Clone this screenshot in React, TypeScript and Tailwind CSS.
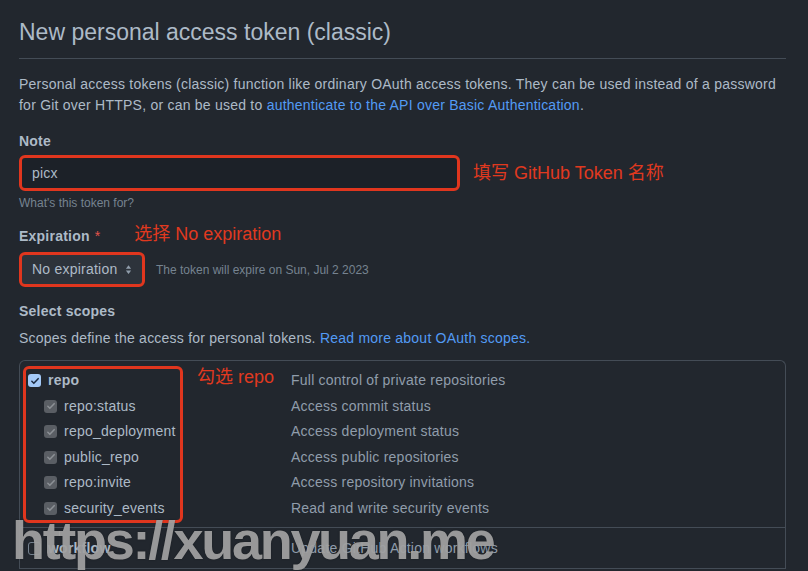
const scopes = [
  { name: "repo:status", desc: "Access commit status" },
  { name: "repo_deployment", desc: "Access deployment status" },
  { name: "public_repo", desc: "Access public repositories" },
  { name: "repo:invite", desc: "Access repository invitations" },
  { name: "security_events", desc: "Read and write security events" },
];

function Check({ main }: { main?: boolean }) {
  return (
    <span
      className={
        main
          ? "flex h-[13px] w-[13px] items-center justify-center rounded-[3px] bg-[#a4c9f7]"
          : "flex h-[13px] w-[13px] items-center justify-center rounded-[3px] bg-[#5a5e64]"
      }
    >
      <svg viewBox="0 0 12 12" className="h-[10px] w-[10px]">
        <path
          d="M2.2 6.4l2.4 2.4 5.2-5.6"
          fill="none"
          stroke={main ? "#1b2a40" : "#8d9196"}
          strokeWidth="1.8"
          strokeLinecap="round"
          strokeLinejoin="round"
        />
      </svg>
    </span>
  );
}

export default function App() {
  return (
    <div className="relative h-[571px] w-[808px] overflow-hidden bg-[#22272e] font-['Liberation_Sans','Noto_Sans_CJK_SC',sans-serif] text-[#adbac7]">
      <div className="pl-[19px] pr-[22px] pt-[17px]">
        <h1 className="border-b border-[#444c56] pb-[11px] text-[23px] leading-[30px]">
          New personal access token (classic)
        </h1>

        <p className="mt-[15px] text-[14px] leading-[21px] tracking-[0.23px]">
          Personal access tokens (classic) function like ordinary OAuth access tokens. They can be used instead of a password
          for Git over HTTPS, or can be used to{" "}
          <span className="text-[#539bf5]">authenticate to the API over Basic Authentication</span>.
        </p>

        {/* Note */}
        <div className="mt-[15px] text-[14px] font-bold leading-[21px] tracking-[0.2px]">Note</div>
        <div className="mt-[3px] flex items-center gap-[13px]">
          <div className="flex h-[36px] w-[441px] items-center rounded-[6px] border-[3px] border-[#e0361e] bg-[#1c2128] pl-[10px] text-[14px] tracking-[0.23px]">
            picx
          </div>
          <span className="text-[18px] text-[#e0391f]">填写 GitHub Token 名称</span>
        </div>
        <div className="mt-[3px] text-[12px] leading-[18px] text-[#768390]">What's this token for?</div>

        {/* Expiration */}
        <div className="mt-[13px] flex items-center">
          <span className="text-[14px] font-bold leading-[21px] tracking-[0.23px]">Expiration</span>
          <span className="ml-[5px] text-[14px] text-[#e5534b]">*</span>
          <span className="ml-[34px] -mt-[4px] text-[18px] text-[#e0391f]">选择 No expiration</span>
        </div>
        <div className="mt-[4px] flex items-center gap-[11px]">
          <div className="flex h-[35px] w-[126px] items-center rounded-[6px] border-[3px] border-[#e0361e] bg-[#2d333b] pl-[10px] text-[14px] tracking-[0.23px]">
            No expiration
            <svg viewBox="0 0 8 12" className="ml-[8px] h-[11px] w-[7px]">
              <path d="M4 1L7 5H1Z M4 11L7 7H1Z" fill="#909dab" />
            </svg>
          </div>
          <span className="text-[12px] text-[#768390]">The token will expire on Sun, Jul 2 2023</span>
        </div>

        {/* Scopes */}
        <div className="mt-[14px] text-[14px] font-bold leading-[21px] tracking-[0.23px]">Select scopes</div>
        <p className="mt-[6px] text-[14px] leading-[21px] tracking-[0.23px]">
          Scopes define the access for personal tokens.{" "}
          <span className="text-[#539bf5]">Read more about OAuth scopes.</span>
        </p>

        <div className="relative mt-[11px] rounded-t-[6px] border border-b-0 border-[#444c56] tracking-[0.23px]">
          <div className="border-b border-[#444c56] pb-[6px] pt-[7px] text-[14px]">
            <div className="flex h-[25.5px] items-center">
              <div className="flex w-[271px] items-center gap-[7px] pl-[8px]">
                <Check main />
                <span className="font-bold">repo</span>
              </div>
              <span className="text-[#909dab]">Full control of private repositories</span>
            </div>
            {scopes.map((s) => (
              <div key={s.name} className="flex h-[25.5px] items-center">
                <div className="flex w-[271px] items-center gap-[7px] pl-[24px]">
                  <Check />
                  <span>{s.name}</span>
                </div>
                <span className="text-[#909dab]">{s.desc}</span>
              </div>
            ))}
          </div>
          <div className="border-b border-[#444c56] pb-[7px] pt-[8px] text-[14px]">
            <div className="flex h-[25px] items-center">
              <div className="flex w-[271px] items-center gap-[7px] pl-[8px]">
                <span className="h-[13px] w-[13px] rounded-[3px] border border-[#768390]" />
                <span className="font-bold">workflow</span>
              </div>
              <span className="text-[#909dab]">Update GitHub Action workflows</span>
            </div>
          </div>

          {/* annotation over the repo group */}
          <div className="absolute left-[3px] top-[5px] h-[157px] w-[160px] rounded-[6px] border-[3px] border-[#e0361e]" />
          <span className="absolute left-[177px] top-[3px] text-[18px] tracking-normal text-[#e0391f]">勾选 repo</span>
        </div>
      </div>

      {/* watermark */}
      <div className="pointer-events-none absolute left-[12px] top-[508px] whitespace-nowrap text-[54px] font-bold leading-[64px] tracking-[-2.3px] text-[#a6a6a6]/90 [text-shadow:0_0_2px_rgba(0,0,0,0.35)]">
        https://xuanyuan.me
      </div>
    </div>
  );
}
